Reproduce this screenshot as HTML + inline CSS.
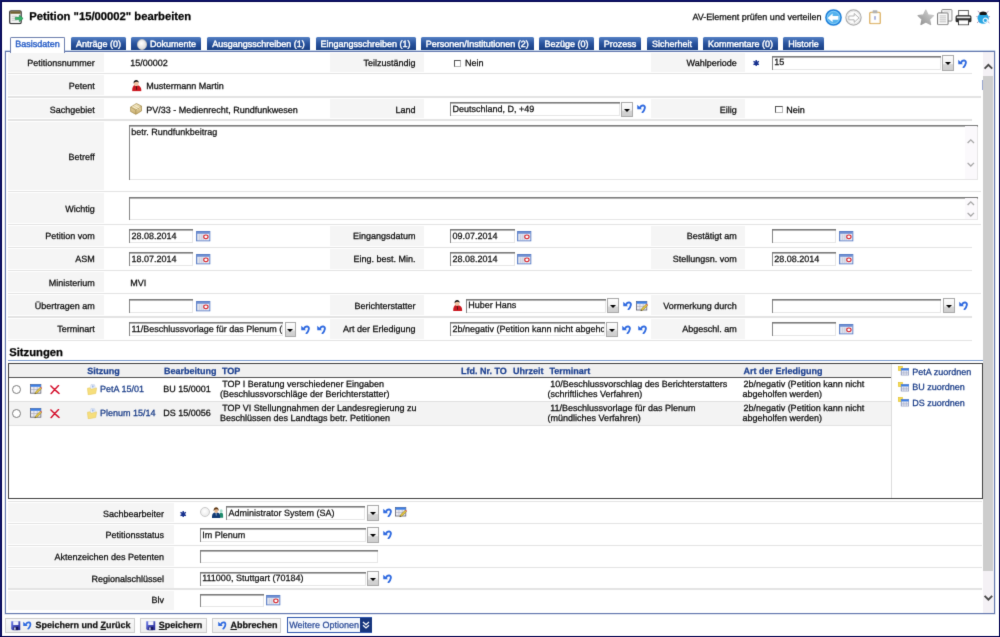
<!DOCTYPE html>
<html><head><meta charset="utf-8"><title>Petition</title>
<style>
*{box-sizing:border-box;margin:0;padding:0}
html,body{width:1000px;height:637px;overflow:hidden;background:#fff}
body{filter:url(#bl)}
body{font-family:"Liberation Sans",sans-serif;font-size:9px;color:#1c1c1c;position:relative;-webkit-text-stroke:.25px currentColor;text-rendering:geometricPrecision}
.a{position:absolute}
svg{position:absolute;overflow:visible}
.fr{position:absolute;background:#0b0b68;z-index:50}
.x{position:absolute;white-space:nowrap;line-height:11px;height:11px;color:#0c0c0c}
.x.b{font-weight:bold}
.x.big{font-size:11.25px;line-height:14px;height:14px;font-weight:bold;color:#000}
.tab{position:absolute;top:37.3px;height:14px;background:linear-gradient(#5480c4,#2a549e 45%,#163c80);border-radius:1.5px 1.5px 0 0}
.tab.act{top:37px;height:15.5px;background:#fff;border:1px solid #6d7fae;border-bottom:none;z-index:3}
.panel{position:absolute;left:5px;top:51px;width:990px;height:562.5px;border:1px solid #6277ae;background:#fff;box-shadow:0 0 0 .5px rgba(98,119,174,.35)}
.lb{position:absolute;background:#f5f5f5}
.sep{position:absolute;height:1.4px;background:#e3e3e3}
.inp{position:absolute;overflow:hidden;background:linear-gradient(#7a7a7a,#7a7a7a) 0 0/100% 1.6px no-repeat,linear-gradient(#868686,#868686) 0 0/1.1px 100% no-repeat,linear-gradient(#e6e6e6,#e6e6e6) 100% 0/1px 100% no-repeat,linear-gradient(#e6e6e6,#e6e6e6) 0 100%/100% 1px no-repeat,#fff}
.ddb{position:absolute;width:11.8px;height:15.3px;background:linear-gradient(#fdfdfd,#f2f2f2 54%,#d4d4d4 62%,#cecece);border:1px solid #a9a9a9}
.ddb:after{content:"";position:absolute;left:1.9px;top:5.9px;border-left:3px solid transparent;border-right:3px solid transparent;border-top:3.4px solid #000}
.cb{position:absolute;width:7.6px;height:7.8px;border:1px solid #b4b4b4;border-top-color:#555;border-left-color:#555;background:#fff}
.btn{position:absolute;top:617.5px;height:15.2px;border:1px solid #cdcdcd;background:linear-gradient(#f8f8f8,#eeeeee)}
u{text-decoration:underline;text-decoration-thickness:.8px;text-underline-offset:1px}
</style></head><body>

<svg width="0" height="0" style="position:absolute"><defs>
<filter id="bl" x="0" y="0" width="1" height="1" color-interpolation-filters="sRGB"><feConvolveMatrix order="3" kernelMatrix="0.0100 0.0800 0.0100 0.0800 0.6400 0.0800 0.0100 0.0800 0.0100" edgeMode="duplicate" preserveAlpha="true"/></filter>
<linearGradient id="gst" x1="1" y1="0" x2="0" y2="1"><stop offset="0" stop-color="#d6d6d6"/><stop offset="1" stop-color="#8e8e8e"/></linearGradient>
<linearGradient id="gdk" x1="0" y1="0" x2="1" y2="1"><stop offset="0" stop-color="#7080e8"/><stop offset="1" stop-color="#1c1c8c"/></linearGradient>
<linearGradient id="gbx" x1="0" y1="0" x2="0" y2="1"><stop offset="0" stop-color="#efe2b8"/><stop offset="1" stop-color="#c8ac6c"/></linearGradient>
<radialGradient id="grd" cx=".4" cy=".35" r=".7"><stop offset="0" stop-color="#fff"/><stop offset="1" stop-color="#dedede"/></radialGradient>
<symbol id="undo" viewBox="0 0 9 9"><path d="M.2 .8L.3 5.300 5 5.300Z" fill="#2f6ae0"/><path d="M3.200 3.300C4.600 .6 8.400 .9 7.800 4.100 7.500 5.700 6.600 7.200 5.500 8.300" fill="none" stroke="#2f6ae0" stroke-width="1.9" stroke-linecap="round"/></symbol>
<symbol id="cal" viewBox="0 0 15 11"><rect x=".6" y=".6" width="13.8" height="9.8" fill="#e9ecf5" stroke="#5b7ec6" stroke-width="1.2"/><rect x="1" y="1" width="13" height="1.900" fill="#6f90d2"/><path d="M3.300 3.600v5.800M5.300 3.600v5.800M7.300 3.600v5.800" stroke="#b4b8cc" stroke-width=".7"/><ellipse cx="10.200" cy="6.100" rx="2.250" ry="1.950" fill="#fff" stroke="#d62028" stroke-width="1.150"/></symbol>
<symbol id="ti" viewBox="0 0 15 15"><rect x=".7" y=".8" width="12" height="13.3" rx="1.4" fill="#f4f4f4" stroke="#3a3a3a" stroke-width="1.3"/><rect x="1.3" y="1.4" width="10.8" height="2.5" fill="#6f5f2e"/><path d="M3 6.5h5M3 8.6h4M3 10.7h5" stroke="#c4c4c4" stroke-width=".9"/><path d="M6.6 7.6h4.2v-2.3l4 3.5-4 3.5v-2.3h-4.2z" fill="#33b66a" stroke="#1d7c44" stroke-width=".6"/></symbol>
<symbol id="bk" viewBox="0 0 17 17"><circle cx="8.5" cy="8.5" r="7.6" fill="#55b2ee" stroke="#1f80da" stroke-width="1.5"/><circle cx="8.5" cy="8.5" r="6.2" fill="none" stroke="#86ccf6" stroke-width=".9"/><path d="M2.6 8.900 L7.600 4.500 V7 H13.400 V10.800 H7.600 V13.300 Z" fill="#fff"/></symbol>
<symbol id="fw" viewBox="0 0 17 17"><circle cx="8.5" cy="8.5" r="7.6" fill="#fdfdfd" stroke="#ababab" stroke-width="1.2"/><circle cx="8.5" cy="8.5" r="6.3" fill="none" stroke="#e0e0e0" stroke-width=".8"/><path d="M14 8.9 L9.2 4.500 V7 H3.800 V10.800 H9.200 V13.300 Z" fill="#fff" stroke="#a2a2a2" stroke-width=".8"/></symbol>
<symbol id="clip" viewBox="0 0 12 14.5"><rect x=".7" y="2.200" width="10.600" height="11.700" rx="1" fill="#fbf6ea" stroke="#d8a854" stroke-width="1.100"/><rect x="2.200" y="3.800" width="7.600" height="8.600" fill="#fefefe"/><rect x="3.600" y=".3" width="4.800" height="3.100" rx=".6" fill="#b2b2b2"/><rect x="5.400" y="6.200" width="1.200" height="3.600" fill="#7a86cc"/></symbol>
<symbol id="star" viewBox="0 0 18 17"><path d="M9 1.100 L11.400 6.200 L17 6.900 L12.900 10.700 L14 16.100 L9 13.400 L4 16.100 L5.100 10.700 L1 6.900 L6.600 6.200 Z" fill="url(#gst)" stroke="url(#gst)" stroke-width="1.300" stroke-linejoin="round"/></symbol>
<symbol id="copy" viewBox="0 0 16 16.5"><rect x="4.8" y=".6" width="10.4" height="11.6" rx=".8" fill="#fafafa" stroke="#808080" stroke-width="1"/><rect x=".6" y="4" width="10.6" height="12" rx=".8" fill="#fdfdfd" stroke="#707070" stroke-width="1"/><path d="M2.6 7h6.6M2.6 9h6.6M2.6 11h6.6M2.6 13h6.6" stroke="#b4b4b4" stroke-width=".9"/><path d="M7 3h6" stroke="#c4c4c4" stroke-width=".8"/></symbol>
<symbol id="prn" viewBox="0 0 17 15.5"><rect x="3.6" y=".5" width="9.8" height="5.6" fill="#fff" stroke="#555" stroke-width=".9"/><rect x=".5" y="5.4" width="16" height="7" rx="1.6" fill="#2c2c2c"/><rect x="1.6" y="6.6" width="13.8" height="1.6" rx=".6" fill="#e8e8e8"/><rect x="3.4" y="10" width="10.2" height="5" fill="#fff" stroke="#333" stroke-width=".9"/></symbol>
<symbol id="bug" viewBox="0 0 14.5 14"><path d="M1.800 .8l2.600 2.800M12.700 .8l-2.600 2.800M.4 6.500l2.600 .8M14.100 6.500l-2.600 .8M1 13l2.600-2.400M13.500 13l-2.600-2.400" stroke="#9a7aa4" stroke-width=".8"/><ellipse cx="7.200" cy="8.300" rx="5.600" ry="5.600" fill="#2aa6e2"/><path d="M3.400 3.800c.4-3.200 7.200-3.200 7.600 0l-.8 1.200h-6z" fill="#141414"/><circle cx="9.400" cy="10.400" r="2.200" fill="#2aa6e2" stroke="#e4f4ff" stroke-width="1.200"/></symbol>
<symbol id="per" viewBox="0 0 10 11.5"><path d="M.2 11.300C0 8 1.100 5.600 3.100 4.900L6 5.300C8.600 6 9.800 8.400 9.600 11.300Z" fill="#cc1820"/><ellipse cx="4.300" cy="3.300" rx="2.400" ry="2.900" fill="#f2c4a4"/><path d="M1.700 3.400C1.100-1 7.100-1 6.900 2.800 6.100 1.700 5.100 1.500 4.100 1.700 3.100 1.900 2.300 2.500 1.700 3.400Z" fill="#141414"/><path d="M3.900 6.100l.5 4.300 .9-.9-.5-3.500z" fill="#4a1414"/></symbol>
<symbol id="box" viewBox="0 0 12 12"><path d="M.5 4.2L6.4.5l5.2 2.6v5L5.8 11.6.5 8.6z" fill="url(#gbx)" stroke="#a08848" stroke-width=".7" stroke-linejoin="round"/><path d="M.5 4.2l5.3 3 5.8-3.9M5.8 7.2v4.4" fill="none" stroke="#a08848" stroke-width=".6"/><path d="M2.4 3.4l5.4 3M4.4 2.2l5.4 3" stroke="#f8f0d4" stroke-width="1"/></symbol>
<symbol id="edit" viewBox="0 0 12 10.5"><rect x=".5" y=".5" width="10.6" height="8.8" fill="#ececf2" stroke="#5a5a6a" stroke-width=".8"/><rect x=".5" y=".4" width="10.6" height="2.4" fill="#3c7ee4"/><path d="M.9 5.6h10M4 3v6M7.4 3v6" stroke="#b0b0c0" stroke-width=".7"/><path d="M4.8 10.2l1-2.4 4.6-4.4 1.4 1.4-4.6 4.4z" fill="#e8c840" stroke="#7a6a20" stroke-width=".5"/><path d="M10.4 3.4l1.4 1.4.5-.8-1.1-1.2z" fill="#e05050"/><path d="M4.8 10.2l.5-1.2.8.7z" fill="#333"/></symbol>
<symbol id="rx" viewBox="0 0 10 9.5"><path d="M.9 .9C3.5 3.6 6.5 6.2 9.1 8.7M8.6 .6C6 3.2 3.6 6 1 8.8" fill="none" stroke="#d4102c" stroke-width="1.45" stroke-linecap="round"/></symbol>
<symbol id="fold" viewBox="0 0 10.5 11.5"><path d="M3.4 5.6L4.2.6l3.6.2 1 5z" fill="#eef3fc" stroke="#b8c8e4" stroke-width=".6"/><path d="M5.2 1.6h1.6v2H5.2z" fill="#9ab4e4"/><path d="M.4 4.4l2.4-.6 1.4 1.6 5.8-1.4-1 5.8-7.8 1.4z" fill="#f6de7c" stroke="#e4c65c" stroke-width=".5"/></symbol>
<symbol id="asg" viewBox="0 0 11 9.5"><rect x=".3" y=".3" width="4.2" height="4.2" fill="#f6dc50" stroke="#e0be30" stroke-width=".6"/><rect x="3.2" y="2.6" width="7.6" height="6.6" fill="#e8eaf4" stroke="#6a7aa8" stroke-width=".7"/><rect x="3.2" y="2.4" width="7.6" height="2" fill="#3c7ee4"/><path d="M5.8 4.6v4.4M8.3 4.6v4.4M3.4 6.8h7.2" stroke="#9aa4c4" stroke-width=".6"/></symbol>
<symbol id="ppl" viewBox="0 0 11.5 11"><path d="M7.200 10.800c-.2-3 .4-4.600 1.600-5l1.600 .2c.9 .6 1.100 2.400 1 4.800z" fill="#1f8c6c"/><ellipse cx="9.300" cy="4" rx="1.500" ry="1.900" fill="#a4dccc"/><path d="M0 11c-.2-3.400 .8-5 2.600-5.400l1.500 .8 1.500-.8c1.800 .4 2.800 2 2.600 5.400z" fill="#123a74"/><ellipse cx="4.200" cy="3.800" rx="1.800" ry="2.300" fill="#e4b48e"/><path d="M1.700 4.200c-.7-5.400 5.700-5.400 5 0-.3-1.500-1.200-2.100-2.500-2-1.200 .1-2 .8-2.500 2z" fill="#5c3612"/><path d="M3.700 6.400l.4 3 .5-3z" fill="#e8eef8"/></symbol>
<symbol id="disk" viewBox="0 0 9.600 9.500"><path d="M.2 .2h9.200v9.100h-8L.2 8.100z" fill="url(#gdk)"/><rect x="2.200" y=".2" width="5.200" height="3.800" fill="#f4f4fc"/><rect x="2.600" y="5.800" width="4.600" height="3.500" fill="#15155c"/><rect x="3.200" y="6.400" width="1.400" height="2.400" fill="#e8e8f8"/></symbol>
<symbol id="chev" viewBox="0 0 8 8"><path d="M1 1l3 2.800L7 1M1 4.200l3 2.800 3-2.800" fill="none" stroke="#fff" stroke-width="1.200"/></symbol>
<symbol id="ast" viewBox="0 0 6.4 6"><path d="M3.200 0V6M.5 1.450L5.900 4.550M5.900 1.450L.5 4.550" stroke="#16308e" stroke-width="1.400"/><circle cx="3.2" cy="3" r="1.2" fill="#16308e"/></symbol>
</defs></svg>

<div class="fr" style="left:-10px;top:-10px;width:1020px;height:11.9px;background:#02024f"></div>
<div class="fr" style="left:-10px;top:-10px;width:11.8px;height:657px;background:#02024f"></div>
<div class="fr" style="left:-10px;top:-10px;width:1020px;height:11px;background:#10166a"></div>
<div class="fr" style="left:-10px;top:-10px;width:11px;height:657px;background:#10166a"></div>
<div class="fr" style="left:998.8px;top:-10px;width:12px;height:657px;background:#02024f"></div>
<div class="fr" style="left:-10px;top:635.8px;width:1020px;height:11px;background:#02024f"></div>
<svg style="left:8.7px;top:9.6px" width="14.4" height="14.4"><use href="#ti"/></svg>
<div class="x big" style="left:29.20px;top:10px;">Petition "15/00002" bearbeiten</div>
<div class="x " style="left:692.50px;top:12px;">AV-Element prüfen und verteilen</div>
<svg style="left:825.2px;top:8.7px" width="17" height="17"><use href="#bk"/></svg>
<svg style="left:845.2px;top:8.7px" width="17" height="17"><use href="#fw"/></svg>
<svg style="left:869.3px;top:10px" width="12" height="14.4"><use href="#clip"/></svg>
<svg style="left:916.7px;top:9px" width="17.6" height="16.4"><use href="#star"/></svg>
<svg style="left:936.5px;top:9.3px" width="15.8" height="16.3"><use href="#copy"/></svg>
<svg style="left:955px;top:9.8px" width="17" height="15.4"><use href="#prn"/></svg>
<svg style="left:975.7px;top:10.3px" width="14.4" height="14"><use href="#bug"/></svg>
<div class="tab act" style="left:10px;width:55px"></div>
<div class="tab" style="left:71px;width:55px"></div>
<div class="tab" style="left:131px;width:70px"></div>
<div class="tab" style="left:207px;width:103px"></div>
<div class="tab" style="left:315.5px;width:100.0px"></div>
<div class="tab" style="left:420.5px;width:113.5px"></div>
<div class="tab" style="left:539px;width:55px"></div>
<div class="tab" style="left:599px;width:42px"></div>
<div class="tab" style="left:646.5px;width:51.0px"></div>
<div class="tab" style="left:703px;width:75px"></div>
<div class="tab" style="left:783px;width:41px"></div>
<div class="a" style="left:136.8px;top:39.3px;width:10.6px;height:10.6px;border-radius:50%;background:radial-gradient(circle at 42% 38%,#fff,#d2d2d2);border:.6px solid #c0c0c0;z-index:4"></div>
<div class="a" style="left:5px;top:49.9px;width:990px;height:1.2px;background:#dbe9f6"></div>
<div class="panel"></div>
<div class="sep" style="left:8px;top:73.0px;width:964px"></div>
<div class="sep" style="left:8px;top:96.39999999999999px;width:973px"></div>
<div class="sep" style="left:8px;top:119.39999999999999px;width:964px"></div>
<div class="sep" style="left:8px;top:190.70000000000002px;width:973px"></div>
<div class="sep" style="left:8px;top:223.70000000000002px;width:973px"></div>
<div class="sep" style="left:8px;top:246.60000000000002px;width:964px"></div>
<div class="sep" style="left:8px;top:269.8px;width:964px"></div>
<div class="sep" style="left:8px;top:293.0px;width:973px"></div>
<div class="sep" style="left:8px;top:316.2px;width:964px"></div>
<div class="sep" style="left:8px;top:339.5px;width:964px"></div>
<div class="lb" style="left:8px;width:96px;top:53.10px;height:19.00px"></div>
<div class="x " style="right:905.20px;top:58px;">Petitionsnummer</div>
<div class="lb" style="left:8px;width:96px;top:75.30px;height:20.20px"></div>
<div class="x " style="right:905.20px;top:81px;">Petent</div>
<div class="lb" style="left:8px;width:96px;top:98.70px;height:19.80px"></div>
<div class="x " style="right:905.20px;top:105px;">Sachgebiet</div>
<div class="lb" style="left:8px;width:96px;top:121.70px;height:68.10px"></div>
<div class="x " style="right:905.20px;top:152px;">Betreff</div>
<div class="lb" style="left:8px;width:96px;top:193.00px;height:29.80px"></div>
<div class="x " style="right:905.20px;top:204px;">Wichtig</div>
<div class="lb" style="left:8px;width:96px;top:226.00px;height:19.70px"></div>
<div class="x " style="right:905.20px;top:231px;">Petition vom</div>
<div class="lb" style="left:8px;width:96px;top:248.90px;height:20.00px"></div>
<div class="x " style="right:905.20px;top:254px;">ASM</div>
<div class="lb" style="left:8px;width:96px;top:272.10px;height:20.00px"></div>
<div class="x " style="right:905.20px;top:278px;">Ministerium</div>
<div class="lb" style="left:8px;width:96px;top:295.30px;height:20.00px"></div>
<div class="x " style="right:905.20px;top:301px;">Übertragen am</div>
<div class="lb" style="left:8px;width:96px;top:318.50px;height:20.10px"></div>
<div class="x " style="right:905.20px;top:324px;">Terminart</div>
<div class="lb" style="left:330px;width:94.19999999999999px;top:53.10px;height:19.00px"></div>
<div class="x " style="right:584.40px;top:58px;">Teilzuständig</div>
<div class="lb" style="left:330px;width:94.19999999999999px;top:98.70px;height:19.80px"></div>
<div class="x " style="right:584.40px;top:105px;">Land</div>
<div class="lb" style="left:330px;width:94.19999999999999px;top:226.00px;height:19.70px"></div>
<div class="x " style="right:584.40px;top:231px;">Eingangsdatum</div>
<div class="lb" style="left:330px;width:94.19999999999999px;top:248.90px;height:20.00px"></div>
<div class="x " style="right:584.40px;top:254px;">Eing. best. Min.</div>
<div class="lb" style="left:330px;width:94.19999999999999px;top:295.30px;height:20.00px"></div>
<div class="x " style="right:584.40px;top:301px;">Berichterstatter</div>
<div class="lb" style="left:330px;width:94.19999999999999px;top:318.50px;height:20.10px"></div>
<div class="x " style="right:584.40px;top:324px;">Art der Erledigung</div>
<div class="lb" style="left:651px;width:94.20000000000005px;top:53.10px;height:19.00px"></div>
<div class="x " style="right:263.20px;top:58px;">Wahlperiode</div>
<div class="lb" style="left:651px;width:94.20000000000005px;top:98.70px;height:19.80px"></div>
<div class="x " style="right:263.20px;top:105px;">Eilig</div>
<div class="lb" style="left:651px;width:94.20000000000005px;top:226.00px;height:19.70px"></div>
<div class="x " style="right:263.20px;top:231px;">Bestätigt am</div>
<div class="lb" style="left:651px;width:94.20000000000005px;top:248.90px;height:20.00px"></div>
<div class="x " style="right:263.20px;top:254px;">Stellungsn. vom</div>
<div class="lb" style="left:651px;width:94.20000000000005px;top:295.30px;height:20.00px"></div>
<div class="x " style="right:263.20px;top:301px;">Vormerkung durch</div>
<div class="lb" style="left:651px;width:94.20000000000005px;top:318.50px;height:20.10px"></div>
<div class="x " style="right:263.20px;top:324px;">Abgeschl. am</div>
<div class="x " style="left:130.30px;top:58px;">15/00002</div>
<div class="cb" style="left:453.7px;top:59.5px"></div>
<div class="x " style="left:465.00px;top:58px;">Nein</div>
<svg style="left:752.6px;top:60.4px" width="6.4" height="6"><use href="#ast"/></svg>
<div class="inp" style="left:772px;width:168.5px;top:55.80px;height:13.8px"></div>
<div class="a" style="left:773px;top:55.80px;width:166.5px;height:13.8px;overflow:hidden">
<div class="x" style="left:1.20px;top:1.20px;color:#111">15</div></div>
<div class="ddb" style="left:942px;top:55.30px"></div>
<svg style="left:958.0px;top:58.5px" width="9" height="9"><use href="#undo"/></svg>
<svg style="left:131.6px;top:79.6px" width="9.8" height="11.4"><use href="#per"/></svg>
<div class="x " style="left:146.20px;top:81px;">Mustermann Martin</div>
<svg style="left:130px;top:103.2px" width="12" height="11.8"><use href="#box"/></svg>
<div class="x " style="left:146.20px;top:105px;">PV/33 - Medienrecht, Rundfunkwesen</div>
<div class="inp" style="left:450.4px;width:169.20000000000005px;top:102.30px;height:13.8px"></div>
<div class="a" style="left:451.4px;top:102.30px;width:167.20000000000005px;height:13.8px;overflow:hidden">
<div class="x" style="left:1.20px;top:1.70px;color:#111">Deutschland, D, +49</div></div>
<div class="ddb" style="left:621.2px;top:101.90px"></div>
<svg style="left:637.4px;top:104.1px" width="9" height="9"><use href="#undo"/></svg>
<div class="cb" style="left:775.2px;top:105.5px"></div>
<div class="x " style="left:786.30px;top:105px;">Nein</div>
<div class="inp" style="left:129px;top:124.8px;width:849.3px;height:55.2px"></div>
<div class="a" style="left:964.5px;top:126.3px;width:12.8px;height:52.8px;background:#fbf9fc"></div>
<div class="x " style="left:131.20px;top:127px;color:#111;">betr. Rundfunkbeitrag</div>
<div class="inp" style="left:129px;top:196.5px;width:849.3px;height:23px"></div>
<div class="a" style="left:964.5px;top:198px;width:12.8px;height:20.6px;background:#fbf9fc"></div>
<svg style="left:967.2px;top:139.2px" width="7.6" height="4.56"><path d="M.6 4.00 L3.80 .9 L7.00 4.00" fill="none" stroke="#a6a6a6" stroke-width="1.3"/></svg>
<svg style="left:967.2px;top:162px" width="7.6" height="4.56"><path d="M.6 .9 L3.80 4.00 L7.00 .9" fill="none" stroke="#a6a6a6" stroke-width="1.3"/></svg>
<svg style="left:967.2px;top:200.5px" width="7.6" height="4.56"><path d="M.6 4.00 L3.80 .9 L7.00 4.00" fill="none" stroke="#a6a6a6" stroke-width="1.3"/></svg>
<svg style="left:967.2px;top:211.9px" width="7.6" height="4.56"><path d="M.6 .9 L3.80 4.00 L7.00 .9" fill="none" stroke="#a6a6a6" stroke-width="1.3"/></svg>
<div class="inp" style="left:129.2px;width:63.80000000000001px;top:229.30px;height:13.8px"></div>
<div class="a" style="left:130.2px;top:229.30px;width:61.80000000000001px;height:13.8px;overflow:hidden">
<div class="x" style="left:1.20px;top:1.70px;color:#111">28.08.2014</div></div>
<svg style="left:196.2px;top:231.20000000000002px" width="14.6" height="10.6"><use href="#cal"/></svg>
<div class="inp" style="left:450.2px;width:64.80000000000001px;top:229.30px;height:13.8px"></div>
<div class="a" style="left:451.2px;top:229.30px;width:62.80000000000001px;height:13.8px;overflow:hidden">
<div class="x" style="left:1.20px;top:1.70px;color:#111">09.07.2014</div></div>
<svg style="left:517.3px;top:231.20000000000002px" width="14.6" height="10.6"><use href="#cal"/></svg>
<div class="inp" style="left:772px;width:64px;top:229.30px;height:13.8px"></div>
<svg style="left:839px;top:231.20000000000002px" width="14.6" height="10.6"><use href="#cal"/></svg>
<div class="inp" style="left:129.2px;width:63.80000000000001px;top:252.40px;height:13.8px"></div>
<div class="a" style="left:130.2px;top:252.40px;width:61.80000000000001px;height:13.8px;overflow:hidden">
<div class="x" style="left:1.20px;top:1.60px;color:#111">18.07.2014</div></div>
<svg style="left:196.2px;top:254.3px" width="14.6" height="10.6"><use href="#cal"/></svg>
<div class="inp" style="left:450.2px;width:64.80000000000001px;top:252.40px;height:13.8px"></div>
<div class="a" style="left:451.2px;top:252.40px;width:62.80000000000001px;height:13.8px;overflow:hidden">
<div class="x" style="left:1.20px;top:1.60px;color:#111">28.08.2014</div></div>
<svg style="left:517.3px;top:254.3px" width="14.6" height="10.6"><use href="#cal"/></svg>
<div class="inp" style="left:772px;width:64px;top:252.40px;height:13.8px"></div>
<div class="a" style="left:773px;top:252.40px;width:62px;height:13.8px;overflow:hidden">
<div class="x" style="left:1.20px;top:1.60px;color:#111">28.08.2014</div></div>
<svg style="left:839px;top:254.3px" width="14.6" height="10.6"><use href="#cal"/></svg>
<div class="x " style="left:130.30px;top:278px;">MVI</div>
<div class="inp" style="left:129.2px;width:63.80000000000001px;top:298.80px;height:13.8px"></div>
<svg style="left:196.2px;top:300.7px" width="14.6" height="10.6"><use href="#cal"/></svg>
<svg style="left:452.6px;top:300.2px" width="9.6" height="11.2"><use href="#per"/></svg>
<div class="inp" style="left:466px;width:139.5px;top:298.80px;height:13.8px"></div>
<div class="a" style="left:467px;top:298.80px;width:137.5px;height:13.8px;overflow:hidden">
<div class="x" style="left:1.20px;top:1.20px;color:#111">Huber Hans</div></div>
<div class="ddb" style="left:607.2px;top:298.20px"></div>
<svg style="left:623.4px;top:301.3px" width="9" height="9"><use href="#undo"/></svg>
<svg style="left:635.6px;top:300.6px" width="11.8" height="10.2"><use href="#edit"/></svg>
<div class="inp" style="left:772px;width:169px;top:298.80px;height:13.8px"></div>
<div class="ddb" style="left:943px;top:298.20px"></div>
<svg style="left:958.6px;top:301.3px" width="9" height="9"><use href="#undo"/></svg>
<div class="inp" style="left:129.2px;width:154.3px;top:322.20px;height:13.8px"></div>
<div class="a" style="left:130.2px;top:322.20px;width:152.3px;height:13.8px;overflow:hidden">
<div class="x" style="left:1.20px;top:1.80px;color:#111">11/Beschlussvorlage für das Plenum (</div></div>
<div class="ddb" style="left:284.6px;top:321.70px"></div>
<svg style="left:300.59999999999997px;top:324.5px" width="9" height="9"><use href="#undo"/></svg>
<svg style="left:316.59999999999997px;top:324.5px" width="9" height="9"><use href="#undo"/></svg>
<div class="inp" style="left:450.2px;width:154.8px;top:322.20px;height:13.8px"></div>
<div class="a" style="left:451.2px;top:322.20px;width:152.8px;height:13.8px;overflow:hidden">
<div class="x" style="left:1.20px;top:1.80px;color:#111">2b/negativ (Petition kann nicht abgehc</div></div>
<div class="ddb" style="left:605.9px;top:321.70px"></div>
<svg style="left:622.4px;top:324.5px" width="9" height="9"><use href="#undo"/></svg>
<svg style="left:637.6999999999999px;top:324.5px" width="9" height="9"><use href="#undo"/></svg>
<div class="inp" style="left:772px;width:64px;top:322.20px;height:13.8px"></div>
<svg style="left:839px;top:324.09999999999997px" width="14.6" height="10.6"><use href="#cal"/></svg>
<div class="x big" style="left:9.20px;top:346px;">Sitzungen</div>
<div class="a" style="left:8px;top:359.9px;width:974.5px;height:1.4px;background:#7a9bce"></div>
<div class="a" style="left:7.7px;top:363px;width:975.3px;height:136.2px;border:1px solid #404040;background:#fff"></div>
<div class="a" style="left:8.7px;top:364px;width:882.5px;height:13px;background:#f0f0f0"></div>
<div class="a" style="left:8.7px;top:376.8px;width:882.5px;height:1px;background:#505050"></div>
<div class="a" style="left:8.7px;top:401.6px;width:882.5px;height:24.3px;background:#f3f3f3"></div>
<div class="a" style="left:8.7px;top:400.8px;width:882.5px;height:1px;background:#e0e0e0"></div>
<div class="a" style="left:8.7px;top:425.4px;width:882.5px;height:1px;background:#e2e2e2"></div>
<div class="a" style="left:891.2px;top:364px;width:1px;height:134.4px;background:#dcdcdc"></div>
<div class="x b" style="left:87.20px;top:366px;color:#1d4190;">Sitzung</div>
<div class="x b" style="left:164.00px;top:366px;color:#1d4190;">Bearbeitung</div>
<div class="x b" style="left:222.00px;top:366px;color:#1d4190;">TOP</div>
<div class="x b" style="left:461.00px;top:366px;color:#1d4190;">Lfd. Nr. TO</div>
<div class="x b" style="left:513.00px;top:366px;color:#1d4190;">Uhrzeit</div>
<div class="x b" style="left:549.50px;top:366px;color:#1d4190;">Terminart</div>
<div class="x b" style="left:743.50px;top:366px;color:#1d4190;">Art der Erledigung</div>
<div class="a" style="left:11.8px;top:384.6px;width:9.4px;height:9.4px;border-radius:50%;border:1px solid #7c7c7c;background:#fff"></div>
<svg style="left:29.8px;top:383.90000000000003px" width="11.8" height="10.4"><use href="#edit"/></svg>
<svg style="left:50px;top:385.2px" width="10" height="9.4"><use href="#rx"/></svg>
<svg style="left:86.6px;top:384.40000000000003px" width="10.2" height="11.2"><use href="#fold"/></svg>
<div class="x " style="left:100.00px;top:384px;color:#173a86;">PetA 15/01</div>
<div class="x " style="left:163.30px;top:384px;">BU 15/0001</div>
<div class="x " style="left:222.20px;top:379px;">TOP I Beratung verschiedener Eingaben</div>
<div class="x " style="left:220.00px;top:389px;">(Beschlussvorschläge der Berichterstatter)</div>
<div class="x " style="left:550.20px;top:379px;">10/Beschlussvorschlag des Berichterstatters</div>
<div class="x " style="left:547.60px;top:389px;">(schriftliches Verfahren)</div>
<div class="x " style="left:743.60px;top:379px;">2b/negativ (Petition kann nicht</div>
<div class="x " style="left:742.40px;top:389px;">abgeholfen werden)</div>
<div class="a" style="left:11.8px;top:408.6px;width:9.4px;height:9.4px;border-radius:50%;border:1px solid #7c7c7c;background:#fff"></div>
<svg style="left:29.8px;top:407.90000000000003px" width="11.8" height="10.4"><use href="#edit"/></svg>
<svg style="left:50px;top:409.2px" width="10" height="9.4"><use href="#rx"/></svg>
<svg style="left:86.6px;top:408.40000000000003px" width="10.2" height="11.2"><use href="#fold"/></svg>
<div class="x " style="left:100.00px;top:408px;color:#173a86;">Plenum 15/14</div>
<div class="x " style="left:163.30px;top:408px;">DS 15/0056</div>
<div class="x " style="left:222.20px;top:403px;">TOP VI Stellungnahmen der Landesregierung zu</div>
<div class="x " style="left:220.00px;top:413px;">Beschlüssen des Landtags betr. Petitionen</div>
<div class="x " style="left:550.20px;top:403px;">11/Beschlussvorlage für das Plenum</div>
<div class="x " style="left:547.60px;top:413px;">(mündliches Verfahren)</div>
<div class="x " style="left:743.60px;top:403px;">2b/negativ (Petition kann nicht</div>
<div class="x " style="left:742.40px;top:413px;">abgeholfen werden)</div>
<svg style="left:898.4px;top:366.4px" width="11" height="9.6"><use href="#asg"/></svg>
<div class="x " style="left:912.20px;top:367px;color:#173a86;">PetA zuordnen</div>
<svg style="left:898.4px;top:381.84999999999997px" width="11" height="9.6"><use href="#asg"/></svg>
<div class="x " style="left:912.20px;top:382px;color:#173a86;">BU zuordnen</div>
<svg style="left:898.4px;top:397.29999999999995px" width="11" height="9.6"><use href="#asg"/></svg>
<div class="x " style="left:912.20px;top:398px;color:#173a86;">DS zuordnen</div>
<div class="sep" style="left:8px;top:500.90000000000003px;width:974px"></div>
<div class="sep" style="left:8px;top:522.5px;width:974px"></div>
<div class="sep" style="left:8px;top:544.6999999999999px;width:974px"></div>
<div class="sep" style="left:8px;top:566.6999999999999px;width:974px"></div>
<div class="sep" style="left:8px;top:588.4px;width:974px"></div>
<div class="lb" style="left:8px;width:165.5px;top:503.20px;height:18.40px"></div>
<div class="x " style="right:836.00px;top:509px;">Sachbearbeiter</div>
<div class="lb" style="left:8px;width:165.5px;top:524.80px;height:19.00px"></div>
<div class="x " style="right:836.00px;top:530px;">Petitionsstatus</div>
<div class="lb" style="left:8px;width:165.5px;top:547.00px;height:18.80px"></div>
<div class="x " style="right:836.00px;top:552px;">Aktenzeichen des Petenten</div>
<div class="lb" style="left:8px;width:165.5px;top:569.00px;height:18.50px"></div>
<div class="x " style="right:836.00px;top:574px;">Regionalschlüssel</div>
<div class="lb" style="left:8px;width:165.5px;top:590.70px;height:19.70px"></div>
<div class="x " style="right:836.00px;top:595px;">Blv</div>
<svg style="left:179.6px;top:510.70000000000005px" width="6.4" height="6"><use href="#ast"/></svg>
<div class="a" style="left:199.8px;top:506.9px;width:10.2px;height:10.2px;border-radius:50%;border:1.2px solid #c9c9c9;background:radial-gradient(circle at 45% 40%,#fff,#e4e4e4)"></div>
<svg style="left:211.9px;top:506.9px" width="11.4" height="11"><use href="#ppl"/></svg>
<div class="inp" style="left:226.4px;width:139.1px;top:506.00px;height:13.8px"></div>
<div class="a" style="left:227.4px;top:506.00px;width:137.1px;height:13.8px;overflow:hidden">
<div class="x" style="left:1.20px;top:2.00px;color:#111">Administrator System (SA)</div></div>
<div class="ddb" style="left:367.3px;top:505.30px"></div>
<svg style="left:383.0px;top:507.7px" width="9" height="9"><use href="#undo"/></svg>
<svg style="left:395px;top:507.2px" width="11.8" height="10.2"><use href="#edit"/></svg>
<div class="inp" style="left:200px;width:165.5px;top:528.00px;height:13.8px"></div>
<div class="a" style="left:201px;top:528.00px;width:163.5px;height:13.8px;overflow:hidden">
<div class="x" style="left:1.20px;top:2.00px;color:#111">Im Plenum</div></div>
<div class="ddb" style="left:367.3px;top:527.30px"></div>
<svg style="left:383.0px;top:529.6999999999999px" width="9" height="9"><use href="#undo"/></svg>
<div class="inp" style="left:200px;width:178px;top:550.00px;height:12.8px"></div>
<div class="inp" style="left:200px;width:165.5px;top:571.80px;height:13.8px"></div>
<div class="a" style="left:201px;top:571.80px;width:163.5px;height:13.8px;overflow:hidden">
<div class="x" style="left:1.20px;top:1.20px;color:#111">111000, Stuttgart (70184)</div></div>
<div class="ddb" style="left:367.3px;top:571.10px"></div>
<svg style="left:383.0px;top:573.5px" width="9" height="9"><use href="#undo"/></svg>
<div class="inp" style="left:200px;width:63.5px;top:593.80px;height:12.8px"></div>
<svg style="left:265.8px;top:594.5px" width="14.6" height="10.6"><use href="#cal"/></svg>
<div class="a" style="left:983.2px;top:52px;width:10.9px;height:560.7px;background:#f4f1f5"></div>
<div class="a" style="left:983.2px;top:76px;width:9.7px;height:494.6px;background:#cdcdcd"></div>
<svg style="left:984.2px;top:63.8px" width="8.8" height="5.28"><path d="M.6 4.60 L4.40 .9 L8.20 4.60" fill="none" stroke="#484848" stroke-width="1.9"/></svg>
<div class="a" style="left:981.9px;top:80px;width:1px;height:10px;background:#98a6d0"></div>
<svg style="left:984.2px;top:595.2px" width="8.8" height="5.28"><path d="M.6 .9 L4.40 4.60 L8.20 .9" fill="none" stroke="#484848" stroke-width="1.9"/></svg>
<div class="x" style="left:-22.50px;width:120px;text-align:center;top:39px;z-index:5;color:#2d62c8;-webkit-text-stroke:.4px #2d62c8">Basisdaten</div>
<div class="x" style="left:38.50px;width:120px;text-align:center;top:39px;z-index:5;color:#fff;-webkit-text-stroke:.4px #fff">Anträge (0)</div>
<div class="x" style="left:113.00px;width:120px;text-align:center;top:39px;z-index:5;color:#fff;-webkit-text-stroke:.4px #fff">Dokumente</div>
<div class="x" style="left:198.50px;width:120px;text-align:center;top:39px;z-index:5;color:#fff;-webkit-text-stroke:.4px #fff">Ausgangsschreiben (1)</div>
<div class="x" style="left:305.50px;width:120px;text-align:center;top:39px;z-index:5;color:#fff;-webkit-text-stroke:.4px #fff">Eingangsschreiben (1)</div>
<div class="x" style="left:417.25px;width:120px;text-align:center;top:39px;z-index:5;color:#fff;-webkit-text-stroke:.4px #fff">Personen/Institutionen (2)</div>
<div class="x" style="left:506.50px;width:120px;text-align:center;top:39px;z-index:5;color:#fff;-webkit-text-stroke:.4px #fff">Bezüge (0)</div>
<div class="x" style="left:560.00px;width:120px;text-align:center;top:39px;z-index:5;color:#fff;-webkit-text-stroke:.4px #fff">Prozess</div>
<div class="x" style="left:612.00px;width:120px;text-align:center;top:39px;z-index:5;color:#fff;-webkit-text-stroke:.4px #fff">Sicherheit</div>
<div class="x" style="left:680.50px;width:120px;text-align:center;top:39px;z-index:5;color:#fff;-webkit-text-stroke:.4px #fff">Kommentare (0)</div>
<div class="x" style="left:743.50px;width:120px;text-align:center;top:39px;z-index:5;color:#fff;-webkit-text-stroke:.4px #fff">Historie</div>
<div class="btn" style="left:5px;width:129.6px"></div>
<div class="btn" style="left:140px;width:66.6px"></div>
<div class="btn" style="left:212.3px;width:69.2px"></div>
<div class="x b" style="left:35.50px;top:620px;color:#111;">Speichern und <u>Z</u>urück</div>
<div class="x b" style="left:158.80px;top:620px;color:#111;"><u>S</u>peichern</div>
<div class="x b" style="left:230.40px;top:620px;color:#111;"><u>A</u>bbrechen</div>
<div class="a" style="left:287.1px;top:617.2px;width:84.8px;height:15.4px;border:1px solid #3158ae;background:#f5f8fd"></div>
<div class="a" style="left:359.8px;top:617.9px;width:12.1px;height:14.2px;background:#17367e"></div>
<div class="x " style="left:289.20px;top:620px;color:#2c4c98;">Weitere Optionen</div>
<svg style="left:10.7px;top:620.6px" width="9.6" height="9.5"><use href="#disk"/></svg>
<svg style="left:22.8px;top:621px" width="8.6" height="8.6"><use href="#undo"/></svg>
<svg style="left:146.2px;top:620.6px" width="9.6" height="9.5"><use href="#disk"/></svg>
<svg style="left:218px;top:621px" width="8.6" height="8.6"><use href="#undo"/></svg>
<svg style="left:361.9px;top:621.2px" width="8" height="8"><use href="#chev"/></svg>
</body></html>
